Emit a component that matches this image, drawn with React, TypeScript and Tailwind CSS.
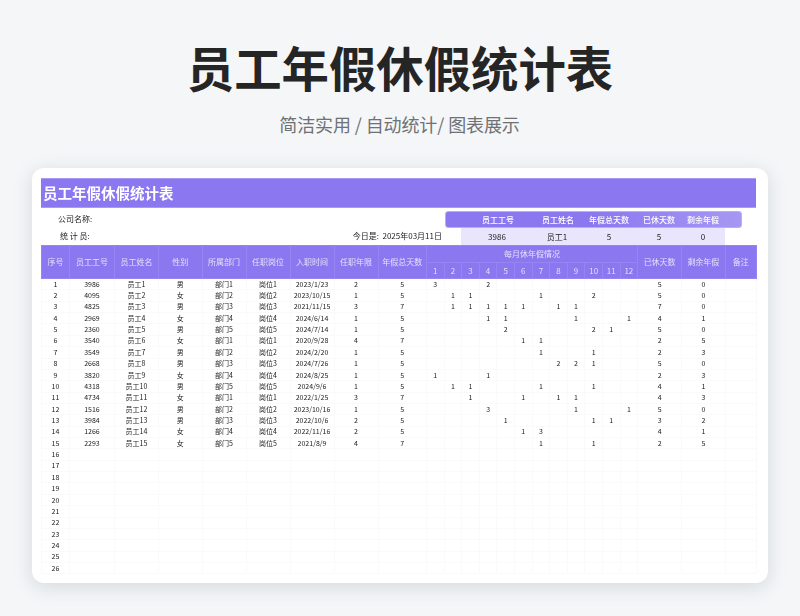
const font = { fontFamily: '"Noto Sans CJK SC", "Noto Sans", sans-serif' };

const rows: [string, string, string, number, number, number, Record<number, number>, number, number][] = [
  ["3986", "男", "2023/1/23", 2, 5, 0, { 1: 3, 4: 2 }, 5, 0],
  ["4095", "女", "2023/10/15", 1, 5, 0, { 2: 1, 3: 1, 7: 1, 10: 2 }, 5, 0],
  ["4825", "男", "2021/11/15", 3, 7, 0, { 2: 1, 3: 1, 4: 1, 5: 1, 6: 1, 8: 1, 9: 1 }, 7, 0],
  ["2969", "女", "2024/6/14", 1, 5, 0, { 4: 1, 5: 1, 9: 1, 12: 1 }, 4, 1],
  ["2360", "男", "2024/7/14", 1, 5, 0, { 5: 2, 10: 2, 11: 1 }, 5, 0],
  ["3540", "女", "2020/9/28", 4, 7, 0, { 6: 1, 7: 1 }, 2, 5],
  ["3549", "男", "2024/2/20", 1, 5, 0, { 7: 1, 10: 1 }, 2, 3],
  ["2668", "男", "2024/7/26", 1, 5, 0, { 8: 2, 9: 2, 10: 1 }, 5, 0],
  ["3820", "女", "2024/8/25", 1, 5, 0, { 1: 1, 4: 1 }, 2, 3],
  ["4318", "男", "2024/9/6", 1, 5, 0, { 2: 1, 3: 1, 7: 1, 10: 1 }, 4, 1],
  ["4734", "女", "2022/1/25", 3, 7, 0, { 3: 1, 6: 1, 8: 1, 9: 1 }, 4, 3],
  ["1516", "男", "2023/10/16", 1, 5, 0, { 4: 3, 9: 1, 12: 1 }, 5, 0],
  ["3984", "男", "2022/10/6", 2, 5, 0, { 5: 1, 10: 1, 11: 1 }, 3, 2],
  ["1266", "女", "2022/11/16", 2, 5, 0, { 6: 1, 7: 3 }, 4, 1],
  ["2293", "女", "2021/8/9", 4, 7, 0, { 7: 1, 10: 1 }, 2, 5],
];

const months = [1, 2, 3, 4, 5, 6, 7, 8, 9, 10, 11, 12];
const blankRows = Array.from({ length: 11 }, (_, i) => i + 16);
const leadHeads = ["序号", "员工工号", "员工姓名", "性别", "所属部门", "任职岗位", "入职时间", "任职年限", "年假总天数"];
const widths = [28, 45, 44, 43.5, 44, 44, 44, 44, 48.5];

const Td = ({ children }: { children?: React.ReactNode }) => (
  <td className="h-[11.36px] p-0 text-center leading-none border border-[#f9fafa] overflow-hidden">{children}</td>
);

const Th = ({ children, rowSpan, colSpan }: { children?: React.ReactNode; rowSpan?: number; colSpan?: number }) => (
  <th rowSpan={rowSpan} colSpan={colSpan} className="p-0 text-center font-normal leading-none border border-[#9485f2] overflow-hidden">
    {children}
  </th>
);

export default function App() {
  return (
    <div style={font} className="w-[800px] h-[616px] overflow-hidden bg-[#f4f6f8] flex flex-col items-center">
      <h1 className="mt-[33px] h-[68px] text-[47.4px] leading-[68px] font-bold text-[#252525]">员工年假休假统计表</h1>
      <p className="mt-[11px] h-[24px] pr-[1px] text-[18px] leading-[24px] tracking-[-0.1px] text-[#6f7275]">简洁实用 / 自动统计/ 图表展示</p>

      <div className="mt-[32px] w-[736px] h-[415px] bg-white rounded-[12px] shadow-[0_4px_18px_rgba(120,135,140,0.25)] pt-[10px] pl-[9px] pr-[12px] blur-[0.3px]">
        <div className="h-[30px] bg-[#8b78f0] flex items-center pl-[2px] text-[14.5px] font-bold text-white border-y border-[#a99bf5]">
          员工年假休假统计表
        </div>

        <div className="h-[37px] flex text-[8px] text-[#222222]">
          <div className="w-[404px] flex flex-col">
            <div className="h-[20px] pt-[6px] pl-[17px] leading-[10px]">公司名称:</div>
            <div className="h-[17px] flex justify-between pl-[19px] pr-[3px] leading-[16px]">
              <span>统 计 员:</span>
              <span className="whitespace-pre">今日是:  2025年03月11日</span>
            </div>
          </div>
          <div className="w-[297px] pt-[3px]">
            <div className="h-[17px] rounded-[3px] border border-[#b9b6c9] bg-gradient-to-r from-[#8b78f0] via-[#8b78f0] to-[#a797f3] flex items-center pl-[15px] text-white font-medium leading-none">
              <span className="w-[74px] text-center">员工工号</span>
              <span className="w-[46px] text-center">员工姓名</span>
              <span className="w-[56px] text-center">年假总天数</span>
              <span className="w-[44px] text-center">已休天数</span>
              <span className="w-[44px] text-center">剩余年假</span>
            </div>
            <div className="ml-[16px] w-[264px] h-[17px] bg-[#e9e5fc] flex items-center leading-none">
              <span className="w-[72px] text-center">3986</span>
              <span className="w-[48px] text-center">员工1</span>
              <span className="w-[56px] text-center">5</span>
              <span className="w-[44px] text-center">5</span>
              <span className="w-[44px] text-center">0</span>
            </div>
          </div>
        </div>

        <table className="table-fixed w-[715px] border-collapse text-[7px] text-[#222222]">
          <colgroup>
            {widths.map((w, i) => (
              <col key={i} style={{ width: w }} />
            ))}
            {months.map((m) => (
              <col key={m} style={{ width: 17.6 }} />
            ))}
            <col style={{ width: 44 }} />
            <col style={{ width: 43.5 }} />
            <col style={{ width: 31.3 }} />
          </colgroup>
          <thead className="bg-[#8b78f0] text-[#e4dffc] text-[8px]">
            <tr className="h-[17px]">
              {leadHeads.map((h) => (
                <Th key={h} rowSpan={2}>{h}</Th>
              ))}
              <Th colSpan={12}>每月休年假情况</Th>
              <Th rowSpan={2}>已休天数</Th>
              <Th rowSpan={2}>剩余年假</Th>
              <Th rowSpan={2}>备注</Th>
            </tr>
            <tr className="h-[16px]">
              {months.map((m) => (
                <Th key={m}>{m}</Th>
              ))}
            </tr>
          </thead>
          <tbody>
            {rows.map((r, i) => {
              const n = (i % 5) + 1;
              return (
                <tr key={i}>
                  <Td>{i + 1}</Td>
                  <Td>{r[0]}</Td>
                  <Td>员工{i + 1}</Td>
                  <Td>{r[1]}</Td>
                  <Td>部门{n}</Td>
                  <Td>岗位{n}</Td>
                  <Td>{r[2]}</Td>
                  <Td>{r[3]}</Td>
                  <Td>{r[4]}</Td>
                  {months.map((m) => (
                    <Td key={m}>{r[6][m]}</Td>
                  ))}
                  <Td>{r[7]}</Td>
                  <Td>{r[8]}</Td>
                  <Td />
                </tr>
              );
            })}
            {blankRows.map((n) => (
              <tr key={n}>
                <Td>{n}</Td>
                {Array.from({ length: 23 }, (_, k) => (
                  <Td key={k} />
                ))}
              </tr>
            ))}
          </tbody>
        </table>
      </div>
    </div>
  );
}
